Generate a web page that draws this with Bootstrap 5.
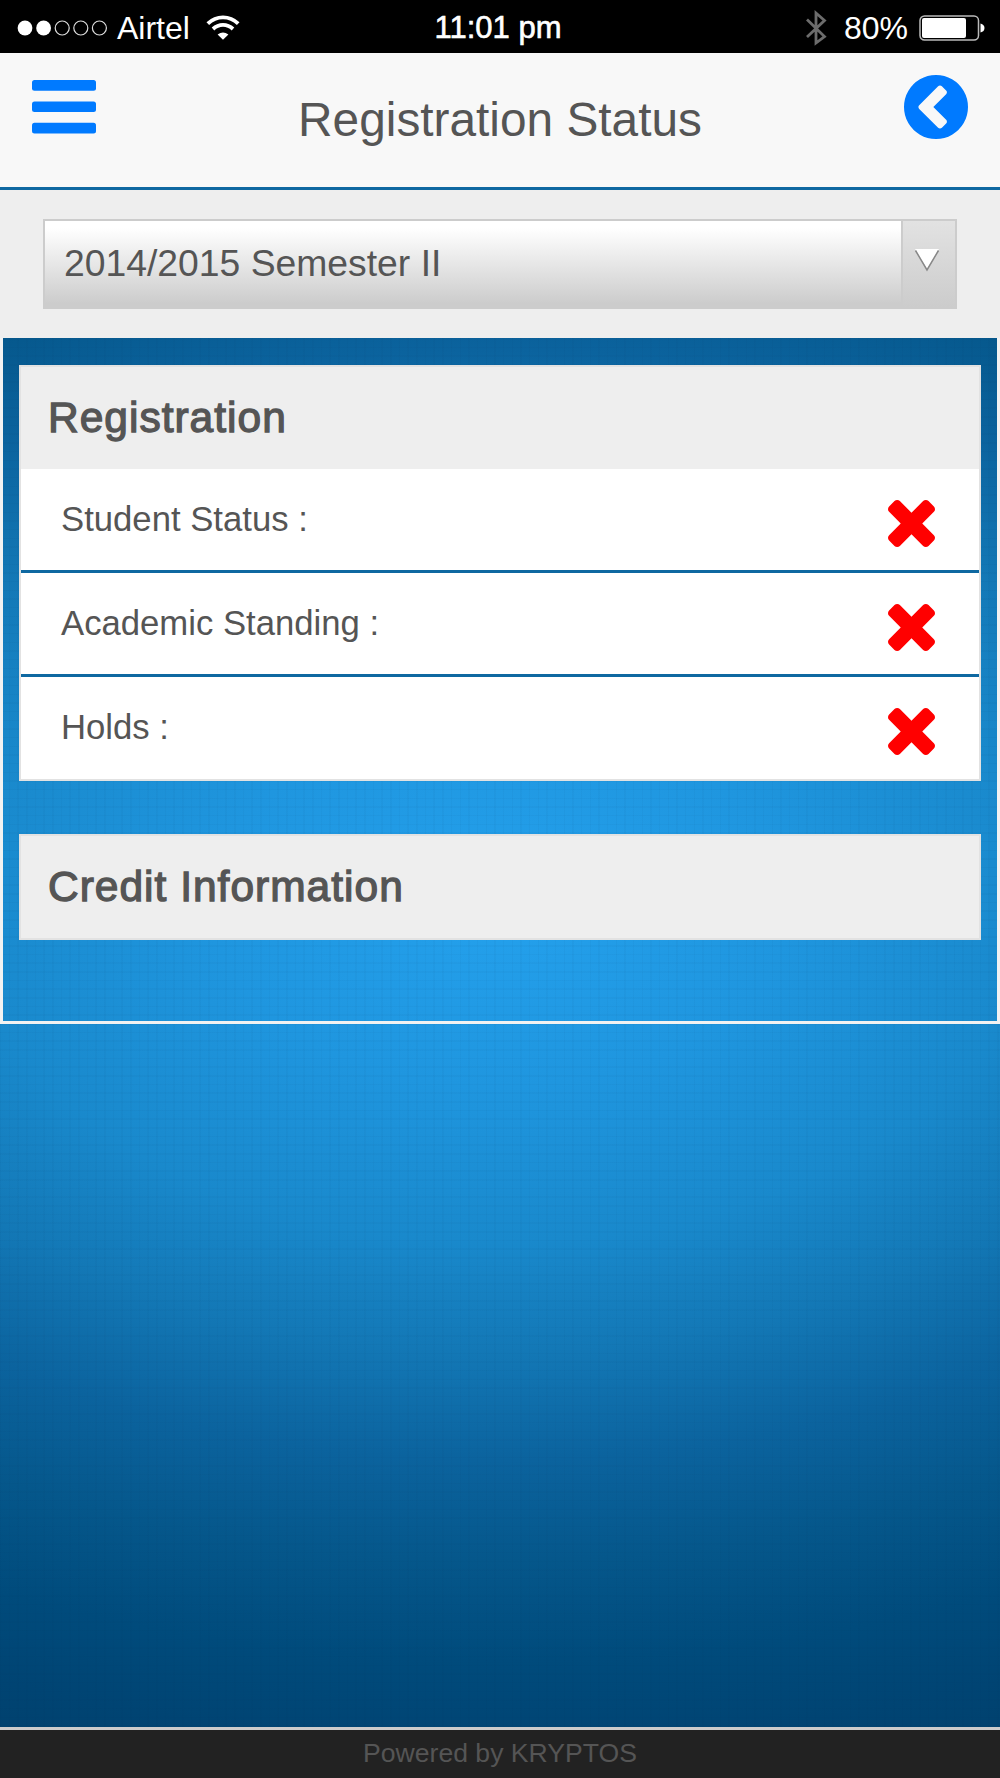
<!DOCTYPE html>
<html lang="en">
<head>
<meta charset="utf-8">
<meta name="viewport" content="width=device-width, initial-scale=1">
<title>Registration Status</title>
<link rel="stylesheet" href="https://cdn.jsdelivr.net/npm/bootstrap@5.3.0/dist/css/bootstrap.min.css">
<style>
  body {
    font-family: "Liberation Sans", Arial, sans-serif;
    color: #555;
    height: 1778px;
    overflow: hidden;
    line-height: 1;
    background:
      repeating-linear-gradient(90deg, rgba(0,40,80,.03) 0 1.5px, transparent 1.5px 8.67px),
      repeating-linear-gradient(180deg, rgba(0,40,80,.03) 0 1.5px, transparent 1.5px 8.67px),
      radial-gradient(1450px 910px at 500px 905px, #24a1ed 0, #1f96df 20%, #1989cc 37%, #1378b6 49%, #0b639e 61%, #05578b 72%, #004b7c 83%, #004473 92%, #00406c 100%);
  }
  svg { display: block; flex: none; }
  .status-bar { height: 53px; background: #000; color: #fff; font-size: 32px; padding: 0 15px 0 17px; }
  .status-bar > div { flex: 1 1 0; padding-top: 2px; }
  .clock { flex: none !important; font-size: 31px; -webkit-text-stroke: .6px #fff; margin: 0 6px 0 0; }
  .wifi { margin-left: 16px; }
  .bluetooth { margin-right: 1px; }
  .app-header { height: 137px; background: #f8f8f8; border-bottom: 3px solid #0f68a1; padding: 22px 32px 0; }
  .app-header h1 { font-size: 47.8px; line-height: 1; margin: 21px 0 0; font-weight: 400; }
  .menu-icon { margin-top: 5px; }
  .picker { height: 148px; background: #eee; padding: 29px 43px 0; }
  .picker-box { height: 90px; border: 2.5px solid #ccc; background: linear-gradient(#fff 10%, #ccc 94%) border-box; font-size: 37.3px; }
  .picker-text { padding: 24px 0 0 19px; }
  .picker-arrow { width: 54px; border-left: 2px solid #ccc; background: linear-gradient(#e2e2e2, #ccc); padding: 27px 0 0 11px; }
  .panel-frame { border: 3px solid #f2f2f2; border-top: 0; height: 686px; padding: 27px 16px 0; }
  .info-card { border: 2px solid #e2e2e2; border-radius: 0; background: #fff; }
  .info-card + .info-card { margin-top: 53px; }
  .info-card h2 { height: 102px; margin: 0; padding: 30px 0 0 27px; background: #eee; font-size: 42.5px; line-height: 1; font-weight: 400; letter-spacing: 1px; -webkit-text-stroke: 1.3px #555; }
  .info-row { height: 104px; padding: 31px 44px 0 40px; font-size: 34.7px; border-bottom: 3px solid #0f68a1; }
  .info-row span { padding-top: 2px; }
  .info-row:last-child { height: 102px; border: 0; }
  .foot { height: 51px; background: #222; border-top: 3px solid #ccc; font-size: 26.6px; padding-top: 10px; }
</style>
</head>
<body class="d-flex flex-column">
  <div class="status-bar d-flex align-items-center">
    <div class="d-flex align-items-center">
      <svg width="92" height="18" viewBox="0 0 92 18"><g fill="#fff"><circle cx="8" cy="9" r="7.4"/><circle cx="26.6" cy="9" r="7.4"/></g><g fill="none" stroke="#ddd" stroke-width="1.2"><circle cx="45.2" cy="9" r="7"/><circle cx="63.8" cy="9" r="7"/><circle cx="82.4" cy="9" r="7"/></g></svg>
      <span class="ms-2">Airtel</span>
      <svg class="wifi" width="34" height="26" viewBox="0 0 34 26"><g fill="none" stroke="#fff" stroke-width="3.8"><path d="M1.8 8.6C10.5 0.2 23.5 0.2 32.2 8.6"/><path d="M7 14C12.8 8.6 21.2 8.6 27 14"/></g><path d="M17 24.8l-5.4-5.2q5.4-4 10.8 0z" fill="#fff"/></svg>
    </div>
    <div class="clock">11:01 pm</div>
    <div class="d-flex align-items-center justify-content-end">
      <svg class="bluetooth" width="22" height="38" viewBox="0 0 22 38"><path d="M2 10.5L19.5 27.5L11 34V4L19.5 11.5L2 28" fill="none" stroke="#6c6c6c" stroke-width="2.8"/></svg>
      <span class="px-3">80%</span>
      <svg style="margin-left:-5px" width="66" height="26" viewBox="0 0 66 26"><rect x="1" y="1" width="58.5" height="24" rx="4.5" fill="none" stroke="#bbb" stroke-width="1.5"/><rect x="3" y="3" width="44" height="20" rx="2" fill="#fff"/><path d="M61.5 8.5q4 1 4 4.5t-4 4.5z" fill="#fff"/></svg>
    </div>
  </div>

  <header class="app-header d-flex justify-content-between align-items-start">
    <svg class="menu-icon" width="64" height="54" viewBox="0 0 64 54" fill="#007aff"><rect width="64" height="10.7" rx="2.5"/><rect y="21.4" width="64" height="10.7" rx="2.5"/><rect y="42.7" width="64" height="10.7" rx="2.5"/></svg>
    <h1>Registration Status</h1>
    <svg width="64" height="64" viewBox="128 128 1536 1536" fill="#007aff"><path d="M1037 1395l102-102q19-19 19-45t-19-45l-307-307 307-307q19-19 19-45t-19-45l-102-102q-19-19-45-19t-45 19l-454 454q-19 19-19 45t19 45l454 454q19 19 45 19t45-19zm627-499q0 209-103 385.5t-279.5 279.5-385.5 103-385.5-103-279.5-279.5-103-385.5 103-385.5 279.5-279.5 385.5-103 385.5 103 279.5 279.5 103 385.5z"/></svg>
  </header>

  <div class="picker">
    <div class="picker-box d-flex justify-content-between">
      <div class="picker-text">2014/2015 Semester II</div>
      <div class="picker-arrow"><svg width="26" height="24" viewBox="0 0 26 24"><path d="M1 1H25L13 21z" fill="#fff"/><path d="M1.5 2.500L13 22L24.5 2.500" fill="none" stroke="#888" stroke-width="1.5"/></svg></div>
    </div>
  </div>

  <main class="panel-frame">
    <section class="card info-card">
      <h2>Registration</h2>
      <div class="info-row d-flex justify-content-between align-items-start"><span>Student Status :</span><svg width="47" height="47" viewBox="302 366 1188 1188"><use href="#cross"/></svg></div>
      <div class="info-row d-flex justify-content-between align-items-start"><span>Academic Standing :</span><svg width="47" height="47" viewBox="302 366 1188 1188"><use href="#cross"/></svg></div>
      <div class="info-row d-flex justify-content-between align-items-start"><span>Holds :</span><svg width="47" height="47" viewBox="302 366 1188 1188"><path id="cross" fill="red" d="M1490 1322q0 40-28 68l-136 136q-28 28-68 28t-68-28l-294-294-294 294q-28 28-68 28t-68-28l-136-136q-28-28-28-68t28-68l294-294-294-294q-28-28-28-68t28-68l136-136q28-28 68-28t68 28l294 294 294-294q28-28 68-28t68 28l136 136q28 28 28 68t-28 68l-294 294 294 294q28 28 28 68z"/></svg></div>
    </section>
    <section class="card info-card">
      <h2>Credit Information</h2>
    </section>
  </main>

  <footer class="foot text-center mt-auto">Powered by KRYPTOS</footer>
<script src="https://cdn.jsdelivr.net/npm/bootstrap@5.3.0/dist/js/bootstrap.bundle.min.js"></script>
</body>
</html>
